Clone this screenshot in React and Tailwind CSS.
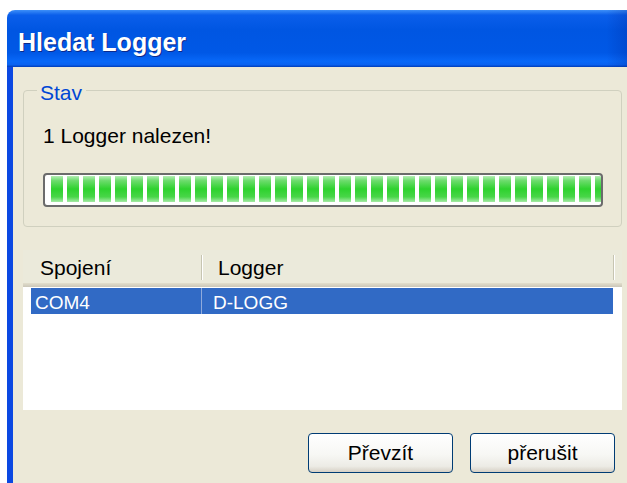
import React from "react";

const blocks = Array.from({ length: 35 });

function XpButton({ children }) {
  return (
    <button className="h-[40px] w-[145px] rounded-[4px] border border-[#003c74] bg-[linear-gradient(180deg,#ffffff_0%,#f7f7f4_55%,#ecebe5_85%,#d6d0c5_100%)] text-[21px] leading-[24px] text-black">
      {children}
    </button>
  );
}

export default function App() {
  return (
    <div className="h-[483px] w-[627px] overflow-hidden bg-white font-['Liberation_Sans',Arial,sans-serif]">
      <div className="ml-[7px] mt-[10px] w-[631px]">
        {/* title bar */}
        <div className="h-[57px] rounded-tl-[8px] rounded-tr-[8px] bg-[linear-gradient(90deg,transparent_95%,rgba(0,30,140,0.35)_100%),linear-gradient(180deg,#3d8ff8_0%,#0a5eea_9%,#0056e2_35%,#0058e6_75%,#0868f8_90%,#0a62f0_96%,#003cb8_100%)] pl-[11px] pt-[17px]">
          <span className="text-[25px] font-bold leading-[30px] text-white [text-shadow:1px_1px_0_#0c2a8c]">
            Hledat Logger
          </span>
        </div>

        {/* dialog body */}
        <div className="border-l-[6px] border-r-[6px] border-[#0b48e2] bg-[#ece9d8] px-[10px] pt-[8px] pb-[20px]">
          <fieldset className="min-w-0 rounded-[4px] border border-[#d0d0bf] pb-[19px] pl-[19px] pr-[18px]">
            <legend className="-ml-[6px] pl-[3px] pr-[4px] pt-[6px] text-[21px] leading-[24px] text-[#0046d5]">
              Stav
            </legend>
            <p className="mt-[19px] text-[21px] leading-[24px] text-black">
              1 Logger nalezen!
            </p>
            <div className="mt-[25px] h-[34px] overflow-hidden rounded-[4px] border-2 border-[#6b6b6b] bg-white">
              <div className="flex h-full gap-[4px] overflow-hidden pl-[6px] pt-[1px]">
                {blocks.map((_, i) => (
                  <div
                    key={i}
                    className="h-[26px] w-[12px] shrink-0 bg-[linear-gradient(180deg,#b4eeb4_0%,#6cdc6c_18%,#2ed22e_50%,#48d648_80%,#a6eaa6_100%)]"
                  />
                ))}
              </div>
            </div>
          </fieldset>

          {/* list view */}
          <div className="mt-[23px] h-[160px] bg-white">
            <div className="flex h-[33px] items-start bg-[#ebeadb] text-[21px] leading-[24px] text-black">
              <div className="w-[178px] pl-[17px] pt-[6px]">Spojení</div>
              <div className="mt-[5px] h-[25px] w-[2px] border-l border-r border-l-[#c7c5b2] border-r-white" />
              <div className="w-[410px] pl-[15px] pt-[6px]">Logger</div>
              <div className="mt-[5px] h-[25px] w-[2px] border-l border-r border-l-[#c7c5b2] border-r-white" />
            </div>
            <div className="h-[4px] bg-[linear-gradient(180deg,#e2decd,#d6d2c2,#cbc7b8)]" />
            <div className="pt-[1px]">
              <div className="ml-[8px] flex h-[26px] w-[582px] bg-[#316ac5] text-[19px] leading-[20px] text-white">
                <div className="w-[171px] border-r border-[#8faadc] pl-[4px] pt-[5px]">COM4</div>
                <div className="pl-[11px] pt-[5px]">D-LOGG</div>
              </div>
            </div>
          </div>

          {/* buttons */}
          <div className="mt-[23px] flex justify-end gap-[17px] pr-[7px]">
            <XpButton>Převzít</XpButton>
            <XpButton>přerušit</XpButton>
          </div>
        </div>
      </div>
    </div>
  );
}
